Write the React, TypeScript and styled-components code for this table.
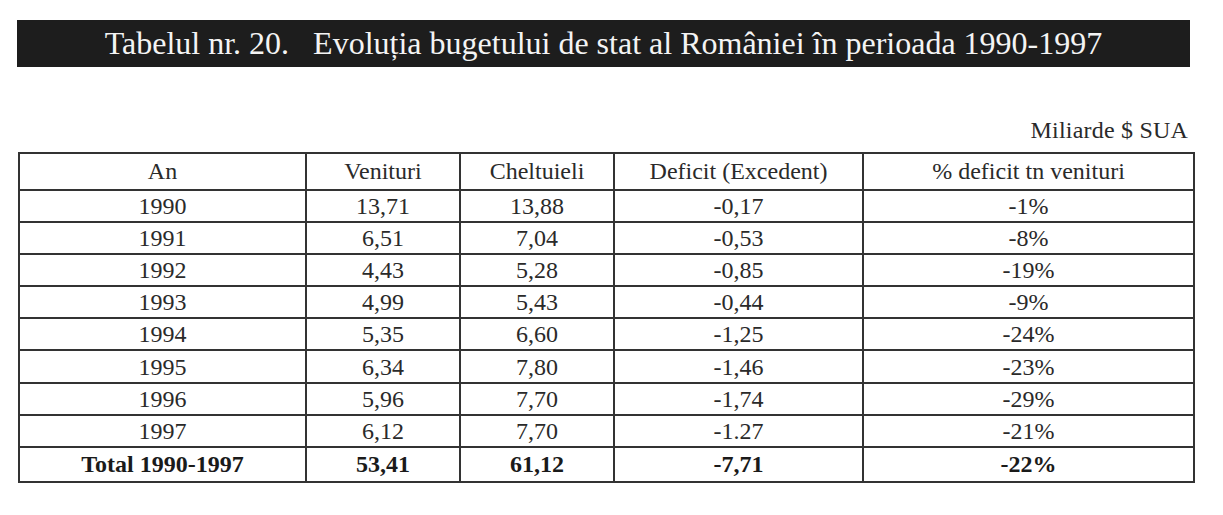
import React from 'react';
import styled, { createGlobalStyle } from 'styled-components';

const GlobalStyle = createGlobalStyle`
  html, body {
    margin: 0;
    padding: 0;
    background: #ffffff;
  }
  body {
    font-family: "Liberation Serif", "Times New Roman", serif;
    color: #222;
  }
`;

type Row = [string, string, string, string, string];

const rows: Row[] = [
  ['1990', '13,71', '13,88', '-0,17', '-1%'],
  ['1991', '6,51', '7,04', '-0,53', '-8%'],
  ['1992', '4,43', '5,28', '-0,85', '-19%'],
  ['1993', '4,99', '5,43', '-0,44', '-9%'],
  ['1994', '5,35', '6,60', '-1,25', '-24%'],
  ['1995', '6,34', '7,80', '-1,46', '-23%'],
  ['1996', '5,96', '7,70', '-1,74', '-29%'],
  ['1997', '6,12', '7,70', '-1.27', '-21%'],
];

const total: Row = ['Total 1990-1997', '53,41', '61,12', '-7,71', '-22%'];

const headers = ['An', 'Venituri', 'Cheltuieli', 'Deficit (Excedent)', '% deficit tn venituri'];
const colWidths = [287, 154, 154, 249, 331];

const App: React.FC = () => (
  <>
    <GlobalStyle />
    <Page>
      <TitleBar>Tabelul nr. 20.   Evoluția bugetului de stat al României în perioada 1990-1997</TitleBar>
      <Unit>Miliarde $ SUA</Unit>
      <Table>
        <colgroup>
          {colWidths.map((w, i) => (
            <col key={i} style={{ width: w }} />
          ))}
        </colgroup>
        <thead>
          <tr>
            {headers.map((h) => (
              <HeadCell key={h}>{h}</HeadCell>
            ))}
          </tr>
        </thead>
        <tbody>
          {rows.map((r) => (
            <tr key={r[0]}>
              {r.map((c, i) => (
                <Cell key={i}>{c}</Cell>
              ))}
            </tr>
          ))}
          <tr>
            {total.map((c, i) => (
              <Cell key={i} $bold>
                {c}
              </Cell>
            ))}
          </tr>
        </tbody>
      </Table>
    </Page>
  </>
);

export default App;

const Page = styled.div`
  width: 1175px;
  margin-left: 18px;
  padding-top: 20px;
`;

const TitleBar = styled.div`
  width: 1173px;
  margin-left: -1px;
  height: 47px;
  background: #1d1d1d;
  color: #f4f4f4;
  font-size: 32px;
  line-height: 47px;
  text-align: center;
  white-space: pre;
`;

const Unit = styled.div`
  margin-top: 46px;
  padding-right: 5px;
  padding-bottom: 5px;
  text-align: right;
  font-size: 24px;
  line-height: 34px;
  letter-spacing: 0.2px;
  color: #2a2a2a;
`;

const Table = styled.table`
  width: 1175px;
  border-collapse: collapse;
  table-layout: fixed;
  border: 2px solid #333;
`;

const HeadCell = styled.th`
  height: 33px;
  padding: 0 0 2px;
  border: 2px solid #333;
  font-weight: normal;
  font-size: 24px;
  line-height: 28px;
  text-align: center;
  color: #2a2a2a;
`;

const Cell = styled.td<{ $bold?: boolean }>`
  height: ${(p) => (p.$bold ? 33 : 30.1)}px;
  padding: 0;
  border: 2px solid #333;
  font-size: 24px;
  line-height: 28px;
  text-align: center;
  font-weight: ${(p) => (p.$bold ? 700 : 400)};
  color: ${(p) => (p.$bold ? '#1a1a1a' : '#2a2a2a')};
`;
